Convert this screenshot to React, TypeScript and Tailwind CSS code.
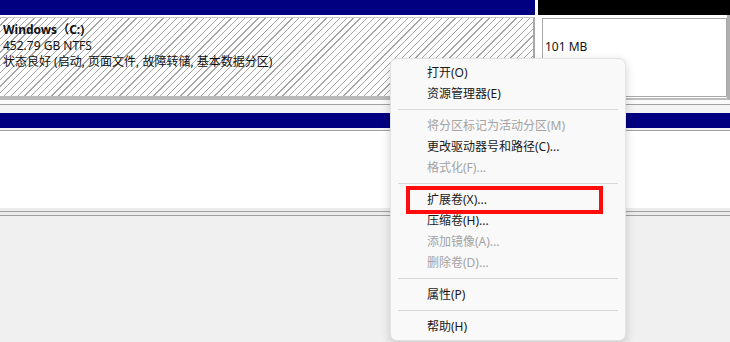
import React from 'react'

type Item = { label: string; disabled?: boolean } | 'sep'

const items: Item[] = [
  { label: '打开(O)' },
  { label: '资源管理器(E)' },
  'sep',
  { label: '将分区标记为活动分区(M)', disabled: true },
  { label: '更改驱动器号和路径(C)...' },
  { label: '格式化(F)...', disabled: true },
  'sep',
  { label: '扩展卷(X)...' },
  { label: '压缩卷(H)...' },
  { label: '添加镜像(A)...', disabled: true },
  { label: '删除卷(D)...', disabled: true },
  'sep',
  { label: '属性(P)' },
  'sep',
  { label: '帮助(H)' },
]

export default function App() {
  return (
    <div className="relative w-[730px] h-[342px] overflow-hidden bg-[#f0f0f0] text-[12px] text-[#111] font-['Noto_Sans','Noto_Sans_CJK_SC',sans-serif]">
      {/* DISK 0 PARTITIONS */}
      <div className="flex h-[100px] bg-white">
        <div className="w-[535px] flex flex-col">
          <div className="h-[15px] bg-[#000080]" />
          <div className="flex-1 mt-[2px] border-t border-[#c8c8c8] border-b-[4px] border-b-[#b9b9b9] border-r-[2px] border-r-[#a8a8a8] bg-[repeating-linear-gradient(135deg,#a6a6a6_0px,#a6a6a6_0.9px,#ffffff_0.9px,#ffffff_4.8px)]">
            <div className="pt-[4px] pl-[3px] leading-[16px]">
              <div className="font-bold">Windows（C:)</div>
              <div>452.79 GB NTFS</div>
              <div>状态良好 (启动, 页面文件, 故障转储, 基本数据分区)</div>
            </div>
          </div>
        </div>
        <div className="w-[3px] bg-white" />
        <div className="flex-1 flex flex-col">
          <div className="h-[15px] bg-black" />
          <div className="flex-1 bg-white pt-[3px] pl-[4px] pb-[1px] border-r-[3px] border-[#b0b0b0] border-b-[2px] border-b-[#bdbdbd]">
            <div className="h-full border border-[#a8a8a8] pt-[20px] pl-[2px] leading-[16px]">
              101 MB
            </div>
          </div>
        </div>
      </div>

      {/* GAP BETWEEN DISKS */}
      <div className="h-[4px] bg-[#fafafa]" />
      <div className="h-px bg-[#a0a0a0]" />
      <div className="h-[8px] bg-[#f4f4f4]" />

      {/* DISK 1 */}
      <div className="h-[15px] bg-[#000080]" />
      <div className="h-[2px] bg-[#f4f4f4]" />
      <div className="h-px bg-[#a0a0a0]" />
      <div className="h-[77px] bg-white" />
      <div className="h-[3px] bg-[#ececec]" />
      <div className="h-px bg-[#a0a0a0]" />
      <div className="h-[3px] bg-[#ececec]" />
      <div className="h-px bg-[#a0a0a0]" />

      {/* CONTEXT MENU */}
      <div className="absolute left-[390px] top-[58px] w-[236px] rounded-[7px] border border-[#e3e3e3] bg-[#f9f9f9] pt-[3px] pb-[3px] shadow-[0_3px_10px_rgba(0,0,0,0.18)]">
        {items.map((item, i) =>
          item === 'sep' ? (
            <div key={i} className="h-[11px] flex items-center px-[7px]">
              <div className="h-px w-full bg-[#d9d9d9]" />
            </div>
          ) : (
            <div
              key={i}
              className={`h-[21px] flex items-center pl-[36px] leading-none ${
                item.disabled ? 'text-[#a3a3a3]' : 'text-[#1a1a1a]'
              }`}
            >
              {item.label}
            </div>
          )
        )}
      </div>

      {/* HIGHLIGHT */}
      <div className="absolute left-[406px] top-[186px] w-[197px] h-[28px] border-[4px] border-[#ff0d0d]" />
    </div>
  )
}
